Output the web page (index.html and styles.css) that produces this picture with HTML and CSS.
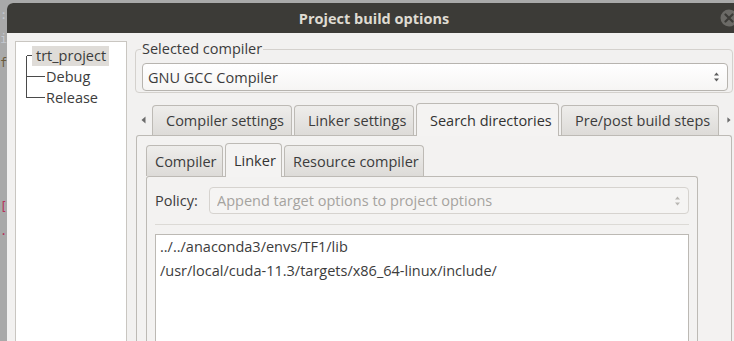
FILE: index.html
```html
<!DOCTYPE html>
<html lang="en">
<head>
  <meta charset="UTF-8">
  <title>Project build options</title>
  <link rel="stylesheet" href="styles.css">
</head>
<body>
  <div class="desk">
    <div class="gutter">
      <div class="ln">:</div>
      <div class="ln">i</div>
      <div class="ln dark">f</div>
      <div class="ln"></div>
      <div class="ln"></div>
      <div class="ln"></div>
      <div class="ln"></div>
      <div class="ln"></div>
      <div class="ln red">[</div>
      <div class="ln red">.</div>
    </div>

    <div class="window">
      <div class="titlebar">
        <span></span>
        <span class="title">Project build options</span>
        <svg class="close" width="18" height="18" viewBox="0 0 18 18">
          <circle cx="9" cy="9" r="8.5" fill="#6b6a66"/>
          <path d="M5.5 5.5 L12.5 12.5 M12.5 5.5 L5.5 12.5" stroke="#3c3b37" stroke-width="2.2" stroke-linecap="round"/>
        </svg>
      </div>

      <div class="content">
        <div class="tree">
          <div class="node">
            <svg width="6" height="21" shape-rendering="crispEdges"><path d="M0.5 10.5 H6 M0.5 10.5 V21" stroke="#4a4a4a" fill="none"/></svg>
            <span class="label sel">trt_project</span>
          </div>
          <div class="node">
            <svg width="19" height="21" shape-rendering="crispEdges"><path d="M0.5 0 V21 M0.5 10.5 H19" stroke="#4a4a4a" fill="none"/></svg>
            <span class="label">Debug</span>
          </div>
          <div class="node">
            <svg width="19" height="21" shape-rendering="crispEdges"><path d="M0.5 0 V10.5 H19" stroke="#4a4a4a" fill="none"/></svg>
            <span class="label">Release</span>
          </div>
        </div>

        <div class="main">
          <fieldset class="frame">
            <legend>Selected compiler</legend>
            <div class="combo">
              <span>GNU GCC Compiler</span>
              <svg class="updown" width="7" height="12" viewBox="0 0 7 12"><path d="M3.5 1.5 L6 4.5 H1 Z M1 7.5 H6 L3.5 10.5 Z" fill="#5e5e5e"/></svg>
            </div>
          </fieldset>

          <div class="notebook outer">
            <div class="tabs">
              <span class="scroll"><svg width="5" height="8" viewBox="0 0 5 8"><path d="M4.5 0.5 V7.5 L0.5 4 Z" fill="#6b6b6b"/></svg></span>
              <span class="tab w-cs">Compiler settings</span>
              <span class="tab w-ls">Linker settings</span>
              <span class="tab active w-sd">Search directories</span>
              <span class="tab w-pp">Pre/post build steps</span>
              <span class="scroll right"><svg width="5" height="8" viewBox="0 0 5 8"><path d="M0.5 0.5 V7.5 L4.5 4 Z" fill="#6b6b6b"/></svg></span>
            </div>
            <div class="page">
              <div class="notebook inner">
                <div class="tabs">
                  <span class="tab w-c">Compiler</span>
                  <span class="tab active w-l">Linker</span>
                  <span class="tab w-rc">Resource compiler</span>
                </div>
                <div class="page">
                  <div class="policy">
                    <span class="policy-label">Policy:</span>
                    <div class="combo disabled">
                      <span>Append target options to project options</span>
                      <svg class="updown" width="7" height="12" viewBox="0 0 7 12"><path d="M3.5 1.5 L6 4.5 H1 Z M1 7.5 H6 L3.5 10.5 Z" fill="#b9b7b3"/></svg>
                    </div>
                  </div>
                  <div class="sep"></div>
                  <div class="listbox">
                    <div class="item">../../anaconda3/envs/TF1/lib</div>
                    <div class="item">/usr/local/cuda-11.3/targets/x86_64-linux/include/</div>
                  </div>
                </div>
              </div>
            </div>
          </div>
        </div>
      </div>
    </div>
  </div>
</body>
</html>
```

FILE: styles.css
```css
html, body { margin: 0; padding: 0; height: 100%; overflow: hidden; }
body { font-family: "Open Sans", "DejaVu Sans", sans-serif; font-size: 14.5px; color: #3c3c3c; background: #a9a9a9; }

.desk { display: flex; height: 341px; padding-top: 3px; box-sizing: border-box; }

.gutter { width: 7px; flex: none; overflow: hidden; font-family: "DejaVu Sans Mono", monospace; font-size: 12px; color: #c4c8d0; }
.gutter .ln { height: 24px; line-height: 24px; white-space: nowrap; }
.gutter .dark { color: #6a5a3a; }
.gutter .red { color: #b8305a; }

.window { width: 734px; flex: none; background: #f2f1f0; border-radius: 6px 6px 0 0; display: flex; flex-direction: column; }

.titlebar {
  height: 30px; background: #3c3b37; border-radius: 6px 6px 0 0;
  display: grid; grid-template-columns: 1fr auto 1fr; align-items: center;
}
.title { color: #dfdbd2; font-weight: bold; font-size: 14.5px; }
.close { justify-self: end; margin-right: 3px; }

.content { flex: 1; display: flex; gap: 8px; padding: 8px 8px 0 8px; min-height: 0; }

/* project tree */
.tree {
  width: 112px; flex: none; box-sizing: border-box;
  background: #fff; border: 1px solid #c9c6c1; border-bottom: none;
  padding: 3px 0 0 10px;
}
.node { display: flex; align-items: center; height: 21px; }
.node svg { flex: none; }
.label { line-height: 20px; padding-left: 1px; white-space: nowrap; }
.label.sel { background: #dfdcd8; padding: 0 3px 0 4px; }

.main { flex: 1; display: flex; flex-direction: column; min-width: 0; }

/* compiler frame */
.frame { margin: 0; border: 1px solid #d4d1cd; border-radius: 4px; padding: 6px 4px 1px 6px; min-width: 0; }
.frame legend { padding: 0 1px; margin-left: -1px; line-height: 16px; }

.combo {
  height: 28px; box-sizing: border-box; display: flex; align-items: center;
  border: 1px solid #b7b4af; border-radius: 4px;
  background: linear-gradient(#ffffff, #f6f5f4);
  padding: 0 7px 0 5px;
}
.combo span { flex: 1; white-space: nowrap; overflow: hidden; }
.combo.disabled { height: 27px; border-color: #d6d3cf; background: #f5f4f3; color: #a5a39f; padding-left: 7px; }

/* notebooks */
.notebook { display: flex; flex-direction: column; }
.notebook.outer { flex: 1; margin: 10px 1px 0 1px; min-height: 0; }
.tabs { display: flex; align-items: flex-end; flex: none; }
.tab {
  flex: none; box-sizing: border-box; height: 30px; margin-right: 2px;
  display: flex; align-items: center; white-space: nowrap;
  border: 1px solid #bdbab5; border-bottom: none; border-radius: 4px 4px 0 0;
  background: linear-gradient(#eeedeb, #dddbd8);
  padding-left: 13px;
}
.tab.active { height: 33px; margin-bottom: -1px; background: #f4f3f2; position: relative; color: #333; }

.w-cs { width: 140px; }
.w-ls { width: 120px; }
.w-sd { width: 143px; }
.w-pp { width: 158px; }

.scroll { flex: none; width: 16px; height: 30px; display: flex; align-items: center; padding-left: 5px; box-sizing: border-box; }
.scroll.right { width: 10px; padding-left: 6px; }

.page {
  flex: 1; border: 1px solid #bdbab5; border-bottom: none; border-radius: 3px 3px 0 0;
  background: #f3f2f1; display: flex; flex-direction: column; min-height: 0;
}
.outer > .page { padding: 7px 0 0 9px; }

.notebook.inner { flex: 1; width: 552px; min-height: 0; }
.inner .tab { height: 31px; padding-left: 8px; }
.inner .tab.active { height: 34px; }
.w-c { width: 77px; }
.w-l { width: 57px; }
.w-rc { width: 140px; }
.inner > .page { padding: 10px 8px 0 8px; }

/* search directories */
.policy { display: flex; align-items: center; }
.policy-label { width: 54px; flex: none; }
.policy .combo { flex: 1; }

.sep { height: 1px; background: #dcdad6; margin-top: 10px; }

.listbox {
  flex: 1; margin-top: 9px; background: #fff;
  border: 1px solid #bcb9b4; border-bottom: none;
  padding: 0 4px; line-height: 23.5px;
}
.item { white-space: nowrap; }
```
